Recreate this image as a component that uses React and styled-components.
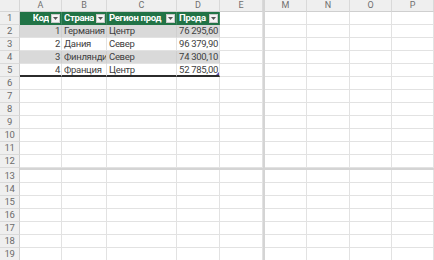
import React from "react";
import styled, { createGlobalStyle } from "styled-components";

const Global = createGlobalStyle`
  html, body { margin: 0; padding: 0; background: #fff; }
  body { font-family: Roboto, "Liberation Sans", sans-serif; }
`;

const COLS = "20px 42px 45px 70px 43px 43px 2px 42px 43px 42px 42px";
const ROWS = `12px repeat(12, 13px) 2px repeat(7, 13px)`;

const Sheet = styled.div`
  display: grid;
  grid-template-columns: ${COLS};
  grid-template-rows: ${ROWS};
  width: 434px;
  height: 260px;
  overflow: hidden;
  line-height: 1;
`;

const Corner = styled.div`
  background: #efefef;
  border-right: 1px solid #d6d6d6;
  border-bottom: 1px solid #d6d6d6;
  box-sizing: border-box;
`;

const ColHead = styled.div`
  background: #efefef;
  border-right: 1px solid #d9d9d9;
  border-bottom: 1px solid #cfcfcf;
  box-sizing: border-box;
  color: #707070;
  font-family: Roboto, sans-serif;
  font-size: 9px;
  display: flex;
  align-items: center;
  justify-content: center;
`;

const RowHead = styled.div`
  background: #efefef;
  border-right: 1px solid #cfcfcf;
  border-bottom: 1px solid #dadada;
  box-sizing: border-box;
  color: #6b6b6b;
  font-family: Roboto, sans-serif;
  font-size: 9.5px;
  letter-spacing: -0.4px;
  display: flex;
  align-items: center;
  justify-content: center;
`;

const Cell = styled.div`
  box-sizing: border-box;
  border-right: 1px solid ${(p) => (p.$head ? "#3d8a5f" : p.$band ? "#cfcfcf" : "#e2e2e2")};
  border-bottom: ${(p) => (p.$last ? "2px solid #2b2b2b" : `1px solid ${p.$head ? "#217346" : "#e2e2e2"}`)};
  background: ${(p) => (p.$head ? "#217346" : p.$band ? "#d9d9d9" : "#fff")};
  color: ${(p) => (p.$head ? "#fff" : "#404040")};
  font-weight: ${(p) => (p.$head ? 700 : 400)};
  font-family: Roboto, sans-serif;
  font-size: 9.5px;
  letter-spacing: ${(p) => (p.$head ? "-0.3px" : "-0.3px")};
  display: flex;
  align-items: center;
  justify-content: ${(p) => (p.$align === "right" ? "flex-end" : "flex-start")};
  padding: 0 1px 0 2px;
  white-space: nowrap;
  overflow: hidden;
  position: relative;
`;

const HeadLabel = styled.span`
  flex: ${(p) => (p.$right ? "0 0 auto" : "1 1 auto")};
  overflow: hidden;
  margin-right: 2px;
`;

const DropButton = styled.span`
  flex: 0 0 auto;
  width: 9px;
  height: 9px;
  background: #f4f4f4;
  border: 1px solid #c8c8c8;
  box-sizing: border-box;
  display: flex;
  align-items: center;
  justify-content: center;
`;

const SplitV = styled.div`
  background: #d4d4d4;
`;

const SplitH = styled.div`
  grid-column: 2 / -1;
  background: #d4d4d4;
`;

const SplitRowHead = styled.div`
  background: #efefef;
  border-right: 1px solid #cfcfcf;
  box-sizing: border-box;
`;

const ResizeMark = styled.span`
  position: absolute;
  right: 0;
  bottom: 0;
  width: 0;
  height: 0;
  border-left: 3px solid transparent;
  border-bottom: 3px solid #5b4fb0;
`;

const Arrow = () => (
  <svg width="5" height="3" viewBox="0 0 5 3">
    <path d="M0 0 H5 L2.5 3 Z" fill="#555" />
  </svg>
);

const left = ["A", "B", "C", "D", "E"];
const right = ["M", "N", "O", "P"];

const tableRows = [
  ["1", "Германия", "Центр", "76 295,60"],
  ["2", "Дания", "Север", "96 379,90"],
  ["3", "Финлянди", "Север", "74 300,10"],
  ["4", "Франция", "Центр", "52 785,00"],
];

const headers = [
  { t: "Код", right: true },
  { t: "Страна" },
  { t: "Регион прод" },
  { t: "Прода" },
];

function EmptyRight({ r }) {
  return right.map((c) => <Cell key={c + r} />);
}

function Row({ n }) {
  if (n === 1) {
    return (
      <>
        <RowHead>1</RowHead>
        {headers.map((h) => (
          <Cell key={h.t} $head $align={h.right ? "right" : "left"}>
            <HeadLabel $right={h.right}>{h.t}</HeadLabel>
            <DropButton>
              <Arrow />
            </DropButton>
          </Cell>
        ))}
        <Cell />
        <SplitV />
        <EmptyRight r={n} />
      </>
    );
  }
  if (n >= 2 && n <= 5) {
    const d = tableRows[n - 2];
    const band = n % 2 === 0;
    const last = n === 5;
    return (
      <>
        <RowHead>{n}</RowHead>
        <Cell $band={band} $last={last} $align="right">{d[0]}</Cell>
        <Cell $band={band} $last={last}>{d[1]}</Cell>
        <Cell $band={band} $last={last}>{d[2]}</Cell>
        <Cell $band={band} $last={last} $align="right">
          {d[3]}
          {last && <ResizeMark />}
        </Cell>
        <Cell />
        <SplitV />
        <EmptyRight r={n} />
      </>
    );
  }
  return (
    <>
      <RowHead>{n}</RowHead>
      {left.map((c) => (
        <Cell key={c} />
      ))}
      <SplitV />
      <EmptyRight r={n} />
    </>
  );
}

export default function App() {
  const top = Array.from({ length: 12 }, (_, i) => i + 1);
  const bottom = Array.from({ length: 7 }, (_, i) => i + 13);
  return (
    <>
      <Global />
      <Sheet>
        <Corner />
        {left.map((c) => (
          <ColHead key={c}>{c}</ColHead>
        ))}
        <SplitV />
        {right.map((c) => (
          <ColHead key={c}>{c}</ColHead>
        ))}
        {top.map((n) => (
          <Row key={n} n={n} />
        ))}
        <SplitRowHead />
        <SplitH />
        {bottom.map((n) => (
          <Row key={n} n={n} />
        ))}
      </Sheet>
    </>
  );
}
